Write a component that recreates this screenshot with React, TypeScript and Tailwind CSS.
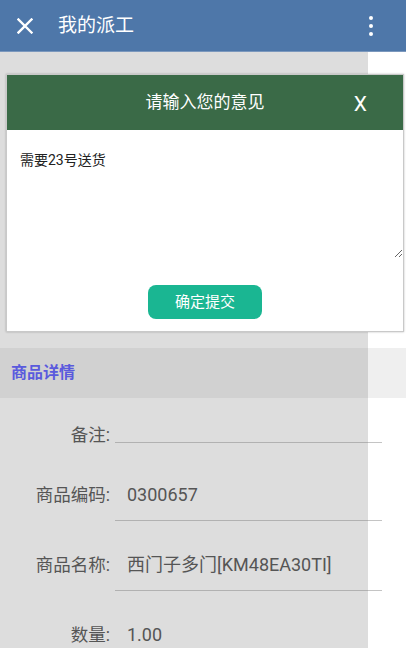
import React from 'react';

const font = { fontFamily: 'Roboto, "Noto Sans CJK SC", sans-serif' };

const rows = [
  { label: '商品编码:', value: '0300657' },
  { label: '商品名称:', value: '西门子多门[KM48EA30TI]' },
  { label: '数量:', value: '1.00' },
];

const App: React.FC = () => {
  return (
    <div className="relative h-[648px] w-[406px] overflow-hidden bg-white" style={font}>
      {/* top bar */}
      <header className="flex h-[52px] items-center border-b border-[#7b98bd] bg-[#4e77a9] text-white">
        <svg className="ml-[17px] h-[16px] w-[16px]" viewBox="0 0 16 16" fill="none" stroke="white" strokeWidth="2.4" strokeLinecap="square">
          <path d="M1.5 1.5 14.5 14.5M14.5 1.5 1.5 14.5" />
        </svg>
        <span className="ml-[25px] text-[19px] leading-none">我的派工</span>
        <div className="ml-auto mr-[33px] flex flex-col gap-[4px]">
          <span className="h-[4px] w-[4px] rounded-full bg-white" />
          <span className="h-[4px] w-[4px] rounded-full bg-white" />
          <span className="h-[4px] w-[4px] rounded-full bg-white" />
        </div>
      </header>

      <div className="h-[296px]" />

      <div className="flex h-[50px] items-center bg-[#efefef] pl-[11px] text-[16px] font-bold text-[#5050ff]">
        商品详情
      </div>

      <div className="mt-[26px] flex h-[22px]">
        <span className="w-[110px] text-right text-[17.5px] leading-[22px] text-[#4a4a4a]">备注:</span>
        <div className="ml-[5px] mr-[24px] h-[19px] flex-1 border-b border-[#c4c4c4]" />
      </div>

      {rows.map((r, i) => (
        <div key={r.label} className={`${i === 0 ? 'mt-[23px]' : 'mt-[18px]'} flex h-[52px] items-center`}>
          <span className="w-[110px] text-right text-[17.5px] text-[#4a4a4a]">{r.label}</span>
          <div className="ml-[5px] mr-[24px] flex h-[52px] flex-1 items-center border-b border-[#c4c4c4] pl-[12px] text-[18px] text-[#4a4a4a]">
            {r.value}
          </div>
        </div>
      ))}

      {/* mask */}
      <div className="absolute bottom-0 left-0 top-[52px] w-[368px] bg-[rgba(120,120,120,0.25)]" />

      {/* dialog */}
      <div className="absolute left-[6px] top-[74px] w-[398px] border border-[#c9c9c9] bg-white shadow-[0_0_2px_rgba(0,0,0,0.25)]">
        <div className="relative flex h-[55px] items-center justify-center bg-[#3a6a47] text-[17px] text-white">
          请输入您的意见
          <span className="absolute right-[36px] top-[19px] text-[21px] leading-none" style={{ fontFamily: 'Roboto, sans-serif' }}>
            X
          </span>
        </div>
        <textarea
          className="block h-[128px] w-full resize-y border-none px-[13px] pt-[20px] text-[14px] text-[#222] outline-none"
          defaultValue="需要23号送货"
        />
        <div className="flex justify-center pb-[12px] pt-[27px]">
          <button className="h-[34px] w-[114px] rounded-[8px] bg-[#1ab692] text-[15px] text-white">确定提交</button>
        </div>
      </div>
    </div>
  );
};

export default App;
